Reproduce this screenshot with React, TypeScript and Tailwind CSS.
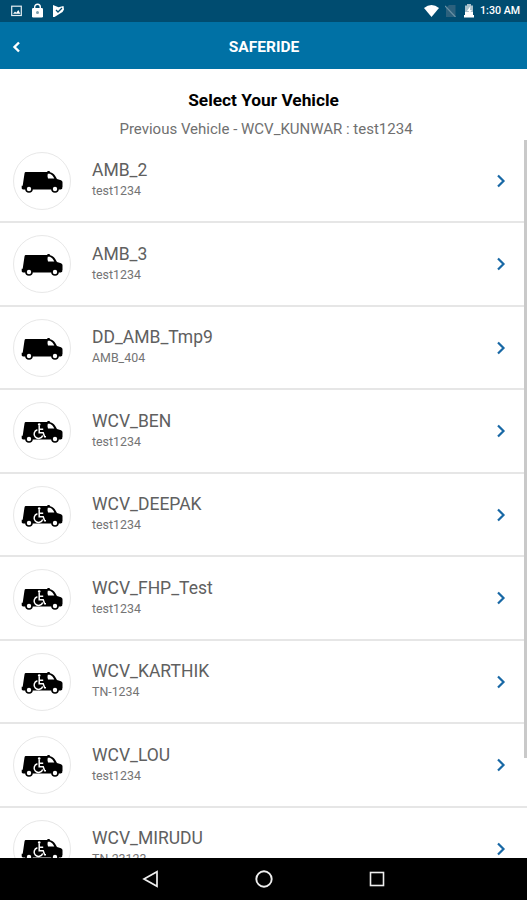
interface Vehicle {
  name: string;
  plate: string;
  wheelchair?: boolean;
}

const vehicles: Vehicle[] = [
  { name: 'AMB_2', plate: 'test1234' },
  { name: 'AMB_3', plate: 'test1234' },
  { name: 'DD_AMB_Tmp9', plate: 'AMB_404' },
  { name: 'WCV_BEN', plate: 'test1234', wheelchair: true },
  { name: 'WCV_DEEPAK', plate: 'test1234', wheelchair: true },
  { name: 'WCV_FHP_Test', plate: 'test1234', wheelchair: true },
  { name: 'WCV_KARTHIK', plate: 'TN-1234', wheelchair: true },
  { name: 'WCV_LOU', plate: 'test1234', wheelchair: true },
  { name: 'WCV_MIRUDU', plate: 'TN-23123', wheelchair: true },
];

function VanIcon({ wheelchair }: { wheelchair?: boolean }) {
  return (
    <svg className="mt-[2px]" width="42" height="22" viewBox="0 0 42 22">
      <path
        d="M4.800 1H26l.8-1h1.600l.8 1.200c2 .3 3.800 1.600 4.900 3.600l1.900 3.300 4 1.100c1 .4 1.500 1.300 1.500 2.400v4.300l-.3.800v1l-1.400.8H1.800L.7 17.500v-2.700h1L3.500 2.400Q3.700 1 4.800 1Z"
        fill="#000"
      />
      <path d="M26.800 2.700h2c1.800.5 3.600 2.500 4.500 4.800l-6.300-.1-.5-2.100Z" fill="#fff" />
      <circle cx="8" cy="18" r="3.800" fill="#000" />
      <circle cx="8" cy="18" r="2.200" fill="#fff" />
      <circle cx="34" cy="18" r="3.800" fill="#000" />
      <circle cx="34" cy="18" r="2.200" fill="#fff" />
      {wheelchair ? (
        <g fill="none" stroke="#fff" strokeWidth="1.500">
          <circle cx="18.200" cy="3.600" r="1.300" fill="#fff" stroke="none" />
          <path d="M18.200 5v6.800h4l1.500 4h1.300M18.200 8.200h4" />
          <path d="M16.400 8.800a4.400 4.400 0 1 0 5.300 5.600" />
        </g>
      ) : null}
    </svg>
  );
}

function StatusBar() {
  return (
    <div className="flex h-[21.500px] shrink-0 items-center justify-between bg-[#004c70] pr-[6px] pl-[11px]">
      <div className="flex items-center gap-[10px]">
        <svg width="11" height="12" viewBox="0 0 11 12">
          <rect x=".7" y="1.200" width="9.600" height="9.300" fill="none" stroke="#e5eef2" strokeWidth="1.200" />
          <path d="M2 8.800 4 6.500l1.300 1.300L7.300 5l2 3.800Z" fill="#fff" />
        </svg>
        <svg width="11" height="15" viewBox="0 0 11 15">
          <path d="M2.700 6V4a2.800 2.800 0 0 1 5.600 0v2" fill="none" stroke="#fff" strokeWidth="1.400" />
          <rect y="5" width="11" height="9.500" rx="1.200" fill="#fff" />
          <circle cx="5.500" cy="9.500" r="1.500" fill="#789baa" />
        </svg>
        <svg width="11" height="12" viewBox="0 0 11 12">
          <path d="M0 0 5.500 2.300 10.500 1 11 4.500 9.500 7 1.500 12H0Z" fill="#fff" />
          <path d="m3 5 2 2 4-4" fill="none" stroke="#004c70" strokeWidth="1.300" />
        </svg>
      </div>
      <div className="flex items-center">
        <svg width="15" height="12" viewBox="0 0 15 12">
          <path d="M0 3Q7.500-2.800 15 3L7.500 12Z" fill="#fff" />
        </svg>
        <svg className="ml-[6px]" width="11" height="12" viewBox="0 0 11 12">
          <path d="M4 0h6.500v12H1V3Z" fill="#2c617d" />
          <path d="m0 1 10.500 11" stroke="#6b91a4" strokeWidth="1.200" />
        </svg>
        <svg className="ml-[8px]" width="10" height="14" viewBox="0 0 10 14">
          <path d="M3 0h4v1.500h2V8H1V1.500h2Z" fill="#a9c0cb" />
          <path d="M1 8h8v3h1v2.500H0V11h1Z" fill="#fff" />
          <path d="M6.500 2 3 7h2l-1 4 4-5H6Z" fill="#fff" />
        </svg>
        <span className="ml-[6px] w-[41px] pt-[2px] text-[10.700px] leading-none font-medium whitespace-nowrap text-white">
          1:30 AM
        </span>
      </div>
    </div>
  );
}

function VehicleRow({ vehicle }: { vehicle: Vehicle }) {
  return (
    <li className="flex h-[83.500px] shrink-0 items-center border-b-[2px] border-[#e6e6e6] pt-[1px] pr-[21px] pl-[13px]">
      <div className="flex size-[58px] shrink-0 items-center justify-center rounded-full border border-[#e8e8e8]">
        <VanIcon wheelchair={vehicle.wheelchair} />
      </div>
      <div className="mb-px ml-[21px] flex-1">
        <p className="text-[17.500px] leading-[21px] text-[#606060]">{vehicle.name}</p>
        <p className="text-[12.400px] leading-[19px] text-[#747474]">{vehicle.plate}</p>
      </div>
      <svg width="10" height="14" viewBox="0 0 10 14">
        <path d="m2 1.500 5.500 5.500L2 12.500" fill="none" stroke="#1868a5" strokeWidth="2.200" />
      </svg>
    </li>
  );
}

export default function App() {
  return (
    <div className="flex h-[900px] w-[527px] flex-col overflow-hidden bg-white font-['Roboto',sans-serif]">
      <StatusBar />
      <header className="grid h-[47px] shrink-0 grid-cols-[1fr_auto_1fr] items-center bg-[#0071a5] px-[12px] pt-[4px]">
        <svg width="9" height="12" viewBox="0 0 9 12">
          <path d="M7 1.500 2.500 6 7 10.500" fill="none" stroke="#fff" strokeWidth="2.400" />
        </svg>
        <h1 className="pt-[2px] pl-px text-[15.500px] font-bold text-white">SAFERIDE</h1>
      </header>

      <div className="h-[71px] shrink-0 pt-[20px] text-center">
        <h2 className="text-[17.300px] leading-[23px] font-bold text-black">Select Your Vehicle</h2>
        <p className="mt-[7px] pl-[5px] text-[15px] leading-[20px] text-[#707070]">
          Previous Vehicle - WCV_KUNWAR : test1234
        </p>
      </div>

      <main className="relative min-h-0 flex-1 overflow-hidden">
        <ul className="flex flex-col">
          {vehicles.map((vehicle) => (
            <VehicleRow key={vehicle.name} vehicle={vehicle} />
          ))}
        </ul>
        {/* scroll thumb */}
        <div className="absolute top-0 right-0 h-[618.500px] w-[3px] bg-[#c9c9c9]" />
      </main>

      <nav className="flex h-[42px] shrink-0 items-center justify-center gap-[96px] bg-black">
        <svg width="17" height="18" viewBox="0 0 17 18">
          <path d="M15 1.800v14.400L2 9Z" fill="none" stroke="#eee" strokeWidth="1.700" />
        </svg>
        <svg width="18" height="18" viewBox="0 0 18 18">
          <circle cx="9" cy="9" r="7.700" fill="none" stroke="#eee" strokeWidth="1.900" />
        </svg>
        <svg width="16" height="16" viewBox="0 0 16 16">
          <rect x="1.500" y="1.500" width="13" height="13" fill="none" stroke="#eee" strokeWidth="1.600" />
        </svg>
      </nav>
    </div>
  );
}
